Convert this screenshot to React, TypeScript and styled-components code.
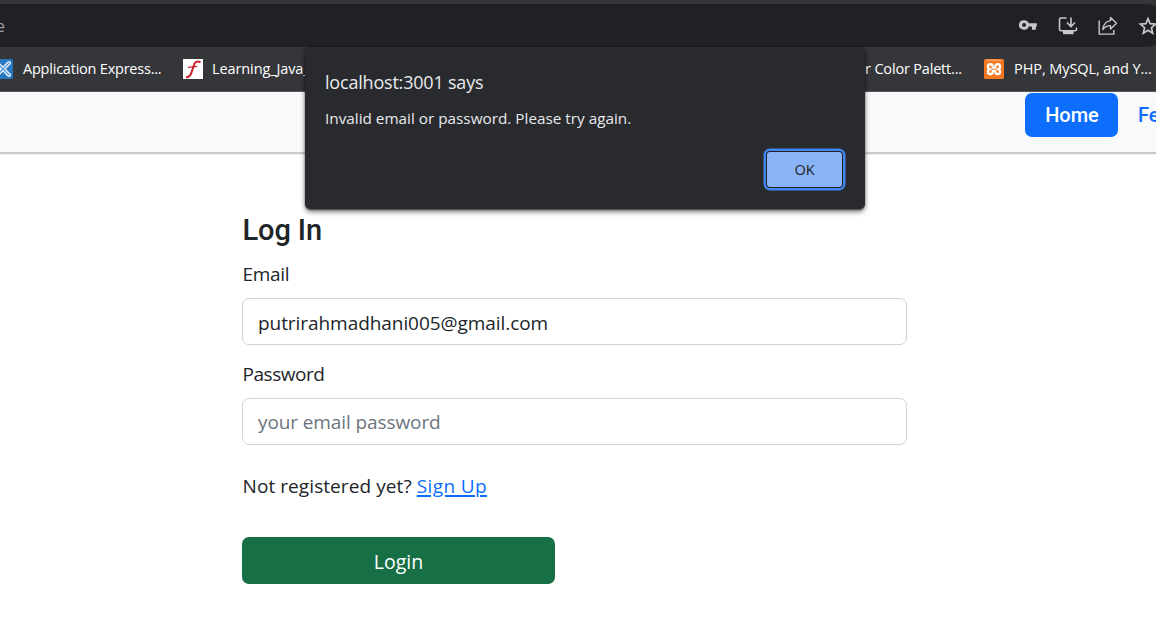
import React from 'react';
import styled, { createGlobalStyle } from 'styled-components';

const GlobalStyle = createGlobalStyle`
  * { box-sizing: border-box; }
  html, body { margin: 0; overflow: hidden; background: #fff; }
  body { font-family: "Open Sans", "Noto Sans", sans-serif; color: #212529; }
`;

const Window = styled.div`
  position: relative;
  width: 1156px;
  height: 640px;
  overflow: hidden;
  background: #fff;
`;

const AddressRow = styled.div`
  height: 47px;
  padding-top: 4px;
  background: #35363a;
`;

const AddressBar = styled.div`
  display: flex;
  align-items: center;
  justify-content: space-between;
  height: 43px;
  background: #202124;
  border-radius: 0 22px 22px 0;
  margin-right: -12px;
  padding-right: 10px;
`;

const UrlTail = styled.span`
  font-size: 16px;
  color: #9aa0a6;
  margin-left: -4px;
`;

const Actions = styled.div`
  display: flex;
  gap: 20px;
  svg { display: block; width: 20px; height: 20px; }
`;

const BookmarksBar = styled.div`
  display: flex;
  align-items: center;
  height: 45px;
  background: #35363a;
  border-bottom: 1px solid #56575a;
`;

const Bookmark = styled.div<{ $start?: number; $gap?: number }>`
  display: flex;
  flex: none;
  align-items: center;
  gap: ${(p) => p.$gap ?? 10}px;
  margin-left: ${(p) => p.$start ?? 0}px;
  svg { display: block; flex: none; width: 20px; height: 20px; }
`;

const BookmarkLabel = styled.span<{ $width: number; $track: number; $end?: boolean }>`
  display: flex;
  justify-content: ${(p) => (p.$end ? 'flex-end' : 'flex-start')};
  width: ${(p) => p.$width}px;
  font-size: 14.5px;
  line-height: 20px;
  letter-spacing: ${(p) => p.$track}px;
  white-space: nowrap;
  color: #fff;
`;

const Navbar = styled.nav`
  display: flex;
  justify-content: flex-end;
  align-items: flex-start;
  gap: 20px;
  height: 62px;
  padding-top: 1px;
  background: #f8f9fb;
  border-bottom: 2px solid #c9cacb;
  box-shadow: 0 1px 0 #f0f0f0;
  font-family: Roboto, sans-serif;
  font-size: 20px;
  font-weight: 500;
  line-height: 44px;
`;

const NavButton = styled.a`
  width: 93px;
  height: 44px;
  padding-left: 1px;
  border-radius: 7px;
  background: #0d6efd;
  color: #fff;
  text-align: center;
`;

const NavLink = styled.a`
  width: 18px;
  overflow: hidden;
  white-space: nowrap;
  color: #0d6efd;
`;

const Form = styled.form`
  display: flex;
  flex-direction: column;
  width: 665px;
  margin: 58px 0 0 242px;
`;

const Title = styled.h1`
  margin: 0 0 0 0.5px;
  font: 500 29px/36px Roboto, sans-serif;
  letter-spacing: -0.1px;
`;

const Label = styled.label<{ $track: number }>`
  margin: 11px 0 0 0.5px;
  height: 30px;
  font-size: 19px;
  line-height: 30px;
  letter-spacing: ${(p) => p.$track}px;
`;

const Input = styled.input<{ $track: number; $gap?: number; $drop?: number }>`
  height: 47px;
  margin: 9px 0 ${(p) => p.$gap ?? 0}px;
  padding: ${(p) => p.$drop ?? 0}px 15px 0;
  border: 1px solid #ced4da;
  border-radius: 7px;
  outline: none;
  background: #fff;
  color: #212529;
  font: 19px "Open Sans", sans-serif;
  letter-spacing: ${(p) => p.$track}px;
  &::placeholder { color: #6c757d; opacity: 1; }
`;

const Hint = styled.p`
  margin: 26px 0 0 0.5px;
  font-size: 19px;
  line-height: 30px;
  letter-spacing: 0.08px;
`;

const HintLink = styled.a`
  color: #0d6efd;
  letter-spacing: 0.4px;
  text-decoration: underline;
  text-decoration-thickness: 2px;
  text-underline-offset: 2px;
  text-decoration-skip-ink: auto;
`;

const Submit = styled.button`
  width: 313px;
  height: 47px;
  margin-top: 36px;
  padding: 1px 0 0;
  border: 0;
  border-radius: 7px;
  background: #176f46;
  color: #fff;
  font: 19.5px "Open Sans", sans-serif;
`;

const Dialog = styled.div`
  position: absolute;
  left: 305px;
  top: 47px;
  display: flex;
  flex-direction: column;
  width: 560px;
  height: 163px;
  padding: 21px 20px 0;
  border-radius: 6px;
  border-bottom: 1px solid #55565a;
  background: #292a2d;
  box-shadow: 0 2px 5px rgba(0, 0, 0, 0.5), 0 0 2px rgba(0, 0, 0, 0.4);
  color: #e8eaed;
`;

const DialogTitle = styled.div`
  font-size: 18px;
  line-height: 28px;
  letter-spacing: -0.2px;
`;

const DialogText = styled.div`
  margin-top: 10px;
  font-size: 15.3px;
  line-height: 24px;
`;

const OkButton = styled.button`
  align-self: flex-end;
  width: 75px;
  height: 35px;
  margin: 22px 3px 0 0;
  padding: 0;
  border: 0;
  border-radius: 3px;
  background: #8ab4f8;
  box-shadow: 0 0 0 1px #202124, 0 0 0 3.5px #4285f4;
  color: #202124;
  font: 14.5px "Open Sans", sans-serif;
`;

const KeyIcon = () => (
  <svg viewBox="0 0 20 20" fill="#c7c8ca">
    <path fillRule="evenodd" d="M6 4.5a5.2 5.2 0 1 0 4.8 7H14V15h4v-3.5h1V8h-8.2A5.2 5.2 0 0 0 6 4.5Zm0 3.2a2 2 0 1 1 0 4 2 2 0 0 1 0-4Z" transform="translate(.2 0) scale(.98 .92)" />
  </svg>
);

const InstallIcon = () => (
  <svg viewBox="0 0 20 20" fill="none" stroke="#c7c8ca" strokeWidth="1.6">
    <path d="M8.5 2H3Q1.500 2 1.500 3.500v9.700Q1.500 14.700 3 14.700h14Q18.500 14.700 18.500 13.200V11.500" />
    <path d="M13 1.500v8.500M9 6.500l4 4 4-4" />
    <path d="M5 15h10.500v3.200H5z" fill="#c7c8ca" stroke="none" />
  </svg>
);

const ShareIcon = () => (
  <svg viewBox="0 0 20 20" fill="none" stroke="#c7c8ca" strokeWidth="1.4">
    <path d="M1.200 4.500v13.600h14.600v-4" />
    <path d="M12.500 1.500l6 5.700-6 5.700V9.600c-3.500 0-5.700 1.200-7.700 3.900.5-4.200 2.800-8.200 7.700-8.900z" strokeLinejoin="round" />
  </svg>
);

const StarIcon = () => (
  <svg viewBox="0 0 20 20" fill="none" stroke="#c7c8ca" strokeWidth="1.7">
    <path d="M10 2.600l2.100 5 5.500.5-4.200 3.600 1.300 5.400L10 14.200l-4.700 2.900 1.300-5.400-4.200-3.600 5.500-.5z" />
  </svg>
);

const ApexIcon = () => (
  <svg viewBox="0 0 20 20">
    <rect width="20" height="20" rx="2" fill="#2878c0" />
    <path d="M4 4l12 12M16 4L4 16" stroke="#e4f0fa" strokeWidth="4" strokeLinecap="round" />
    <path d="M4 4l12 12M16 4L4 16" stroke="#5b9bd2" strokeWidth="1.3" strokeLinecap="round" />
  </svg>
);

const ScriptFIcon = () => (
  <svg viewBox="0 0 20 20" fill="none" stroke="#cb2027">
    <rect width="20" height="20" fill="#fff" stroke="none" />
    <path d="M17.500 3.300C14 1.300 11.800 3 10.800 6.500L8.500 13.500C7.500 16.800 6 18.300 3 18.300" strokeWidth="2" />
    <path d="M5 8.300l9-.9" strokeWidth="1.3" />
  </svg>
);

const XamppIcon = () => (
  <svg viewBox="0 0 20 20">
    <rect width="20" height="20" rx="1.5" fill="#f47721" />
    <path d="M3 1.200h14" stroke="#ffb27c" strokeWidth="1" />
    <g fill="none" stroke="#fff" strokeWidth="2.3" strokeLinejoin="round">
      <path d="M7.500 10.200H5.600Q3.900 9.500 3.900 7.800 3.900 5.200 6.300 5.200 8.600 5.200 8.600 7.500 8.600 8.800 10 8.800t1.400-1.300Q11.400 5.200 13.700 5.200 16.100 5.200 16.100 7.800 16.100 9.500 14.400 10.200H12.500" />
      <path d="M5.600 10.200Q3.900 10.900 3.900 12.600 3.900 15.200 6.300 15.200 8.600 15.200 8.600 12.900 8.600 11.600 10 11.600t1.400 1.300Q11.400 15.200 13.700 15.200 16.100 15.200 16.100 12.600 16.100 10.900 14.400 10.200" />
    </g>
  </svg>
);

export default function App() {
  return (
    <Window>
      <GlobalStyle />
      <AddressRow>
        <AddressBar>
          <UrlTail>e</UrlTail>
          <Actions>
            <KeyIcon />
            <InstallIcon />
            <ShareIcon />
            <StarIcon />
          </Actions>
        </AddressBar>
      </AddressRow>
      <BookmarksBar>
        <Bookmark $start={-7}>
          <ApexIcon />
          <BookmarkLabel $width={160} $track={-0.22}>Application Express...</BookmarkLabel>
        </Bookmark>
        <Bookmark $gap={9}>
          <ScriptFIcon />
          <BookmarkLabel $width={110} $track={-0.1}>Learning_Java_</BookmarkLabel>
        </Bookmark>
        <Bookmark $start={541}>
          <BookmarkLabel $width={99} $track={-0.18} $end>r Color Palett...</BookmarkLabel>
        </Bookmark>
        <Bookmark $start={22}>
          <XamppIcon />
          <BookmarkLabel $width={142} $track={-0.08}>PHP, MySQL, and Y...</BookmarkLabel>
        </Bookmark>
      </BookmarksBar>
      <Navbar>
        <NavButton>Home</NavButton>
        <NavLink>Fe</NavLink>
      </Navbar>
      <Form>
        <Title>Log In</Title>
        <Label $track={-0.3}>Email</Label>
        <Input $track={-0.06} $gap={3} $drop={2} defaultValue="putrirahmadhani005@gmail.com" />
        <Label $track={-0.45}>Password</Label>
        <Input $track={-0.1} placeholder="your email password" />
        <Hint>
          Not registered yet? <HintLink>Sign Up</HintLink>
        </Hint>
        <Submit type="button">Login</Submit>
      </Form>
      <Dialog>
        <DialogTitle>localhost:3001 says</DialogTitle>
        <DialogText>Invalid email or password. Please try again.</DialogText>
        <OkButton>OK</OkButton>
      </Dialog>
    </Window>
  );
}
